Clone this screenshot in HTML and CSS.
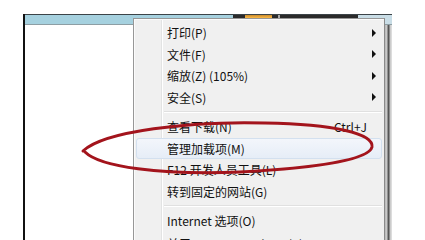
FILE: index.html
```html
<!DOCTYPE html>
<html lang="zh-CN">
<head>
    <meta charset="UTF-8">
    <title>IE 工具菜单</title>
    <link rel="stylesheet" href="styles.css">
</head>
<body>
    <div class="window">
        <!-- Title / toolbar strip -->
        <div class="topbar">
            <div class="bar-blue bar-left"></div>
            <div class="bar-dark">
                <span class="tab-active"></span>
                <span class="tab-sep"></span>
            </div>
            <div class="bar-blue bar-right"></div>
        </div>
        <div class="client">
            <div class="page"></div>
            <div class="frame-right"></div>
        </div>
    </div>

    <!-- Tools menu -->
    <div class="menu">
        <div class="menu-group">
            <div class="item"><span class="label">打印(P)</span><span class="arrow"></span></div>
            <div class="item"><span class="label">文件(F)</span><span class="arrow"></span></div>
            <div class="item"><span class="label">缩放(Z) (105%)</span><span class="arrow"></span></div>
            <div class="item"><span class="label">安全(S)</span><span class="arrow"></span></div>
        </div>
        <div class="sep"></div>
        <div class="menu-group">
            <div class="item"><span class="label">查看下载(N)</span><span class="shortcut">Ctrl+J</span></div>
            <div class="item hover"><span class="label">管理加载项(M)</span></div>
            <div class="item"><span class="label">F12 开发人员工具(L)</span></div>
            <div class="item"><span class="label">转到固定的网站(G)</span></div>
        </div>
        <div class="sep"></div>
        <div class="menu-group">
            <div class="item"><span class="label">Internet 选项(O)</span></div>
            <div class="item last"><span class="label">关于 Internet Explorer(A)</span></div>
        </div>
    </div>

    <!-- hand drawn red mark -->
    <svg class="mark" width="425" height="240" viewBox="0 0 425 240">
        <path d="M 83 151 C 104 131 190 121 265 123 C 335 124 374 134 372 147 C 369 160 315 168 240 172 C 160 175 100 167 85 152"
              fill="none" stroke="#a3141c" stroke-width="3" stroke-linecap="round" stroke-linejoin="round"/>
    </svg>
</body>
</html>
```

FILE: styles.css
```css
body {
    margin: 0;
    width: 425px;
    height: 240px;
    overflow: hidden;
    background-color: #fff;
    font-family: "Noto Sans CJK SC", "Noto Sans", sans-serif;
    font-size: 12px;
    color: #111;
    position: relative;
}

.window {
    margin: 14px 0 0 23px;
    width: 369px;
    height: 226px;
    display: flex;
    flex-direction: column;
    border-left: 2px solid #111;
    box-sizing: border-box;
}

.topbar {
    display: flex;
    height: 9px;
    border-top: 1px solid #3c4448;
    border-bottom: 1px solid #8d9ea4;
    background-color: #a6d1df;
}

.bar-left {
    width: 208px;
}

.bar-dark {
    width: 125px;
    height: 5px;
    background-color: #2b2b2b;
    display: flex;
    align-items: stretch;
}

.tab-active {
    width: 27px;
    margin-left: 12px;
    background: linear-gradient(#c98a2c, #f3b243 50%, #b77521);
}

.tab-sep {
    width: 2px;
    margin-left: 6px;
    background-color: #a9a9a9;
}

.bar-right {
    flex: 1;
    background-color: #c9dde6;
}

.client {
    flex: 1;
    display: flex;
}

.page {
    flex: 1;
    background-color: #fff;
}

.frame-right {
    width: 7px;
    background: linear-gradient(90deg, #b7b7b7 0, #cfcfcf 2px, #555 3px, #555 4px, #c4c4c4 5px, #e4e4e4 7px);
}

.menu {
    position: absolute;
    left: 133px;
    top: 18px;
    width: 252px;
    height: 222px;
    overflow: hidden;
    box-sizing: border-box;
    padding: 3px 2px 0 2px;
    background-color: #f0f0f0;
    border: 1px solid #979797;
    border-bottom: none;
    border-right-color: #8a8a8a;
    box-shadow: inset 1px 1px 0 #fbfbfb;
    background-image: linear-gradient(90deg, transparent 27px, #e2e3e3 27px, #e2e3e3 28px, #fff 28px, #fff 29px, transparent 29px);
}

.item {
    height: 21.5px;
    display: flex;
    align-items: center;
    padding: 0 6px 0 31px;
    box-sizing: border-box;
    white-space: nowrap;
}

.item.last {
    height: 14px;
    align-items: flex-start;
    padding-top: 3px;
}

.label {
    flex: 1;
}

.arrow {
    width: 0;
    height: 0;
    border-left: 4px solid #111;
    border-top: 4px solid transparent;
    border-bottom: 4px solid transparent;
}

.shortcut {
    margin-right: 9px;
}

.hover {
    border: 1px solid #d3e0ef;
    border-radius: 3px;
    background: linear-gradient(#f3f6fb, #e6edf7);
    padding-left: 30px;
}

.sep {
    margin: 3px 0 3px 28px;
    border-top: 1px solid #e0e0e0;
    border-bottom: 1px solid #fff;
    height: 0;
}

.mark {
    position: absolute;
    left: 0;
    top: 0;
    pointer-events: none;
}
```
